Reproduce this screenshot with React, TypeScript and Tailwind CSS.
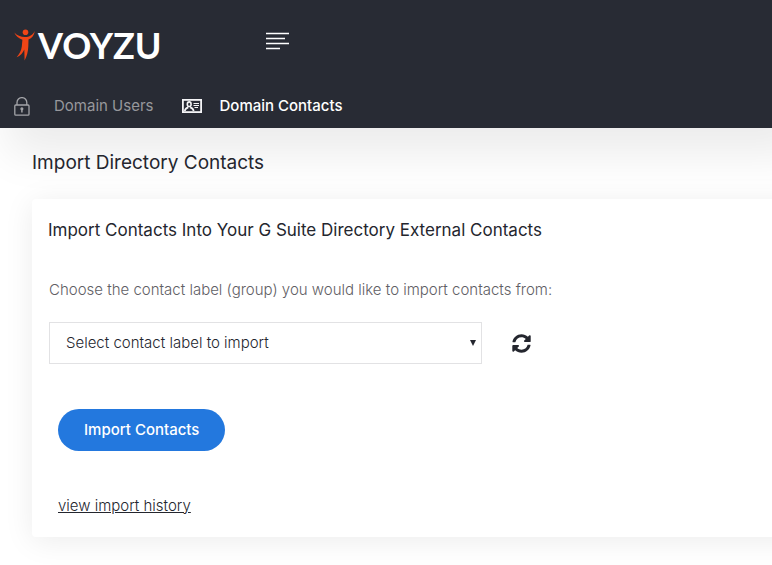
import { useState } from 'react';

function LogoFigure() {
  return (
    <svg width="22" height="32" viewBox="0 0 22 32" fill="#f04516" aria-hidden="true">
      <circle cx="11.5" cy="3.2" r="2.8" />
      <path d="M0.3 3.6C3 6.600 6.500 8 11 8S18.500 6.200 20.800 2C20.200 6.500 17.800 9 14.500 10.500L14.300 17.500C14.100 22.500 12.800 27.500 10.600 31.500L10.300 20.500C8.800 24 6.300 26.800 2.600 28.300C5.500 25.200 7.300 21.500 7.800 17.500L8.400 10.700C4.800 9.500 1.800 7 0.300 3.600Z" />
    </svg>
  );
}

function MenuIcon() {
  return (
    <svg width="23" height="18" viewBox="0 0 23 18" stroke="#fff" strokeWidth="1.6" aria-hidden="true">
      <path d="M0 1.500H23M0 6.500H19M0 11.500H23M0 16.500H14" />
    </svg>
  );
}

function LockIcon() {
  return (
    <svg width="16" height="19" viewBox="0 0 16 19" fill="none" stroke="#a3a4a8" strokeWidth="1.3" aria-hidden="true">
      <rect x="0.800" y="8" width="14.200" height="10.200" rx="1" />
      <path d="M3 8V5.500a4.900 4.900 0 0 1 9.800 0V8" />
      <circle cx="7.900" cy="11.800" r="0.900" fill="#a3a4a8" />
      <path d="M7.900 12V15.500" strokeWidth="1.500" />
    </svg>
  );
}

function ContactCardIcon() {
  return (
    <svg width="20" height="14" viewBox="0 0 20 14" fill="none" stroke="#f4f4f6" aria-hidden="true">
      <rect x="0.900" y="0.900" width="18.200" height="12.200" strokeWidth="1.800" />
      <ellipse cx="7.200" cy="5.200" rx="1.900" ry="2.300" strokeWidth="1.600" />
      <path d="M2.800 12C3 9.500 4.400 9 6.200 8.300M11.600 12C11.400 9.500 10 9 8.200 8.300" strokeWidth="1.700" />
      <path d="M11.500 4.500H17M11.500 6.500H17M12.500 8.500H16" strokeWidth="1.100" />
    </svg>
  );
}

function RefreshIcon() {
  return (
    <svg width="19" height="19" viewBox="0 0 512 512" fill="currentColor" aria-hidden="true">
      <path d="M370.720 133.280C339.458 104.008 298.888 87.962 255.848 88c-77.458.068-144.328 53.178-162.791 126.850-1.344 5.363-6.122 9.150-11.651 9.150H24.103c-7.498 0-13.194-6.807-11.807-14.176C33.933 94.924 134.813 8 256 8c66.448 0 126.791 26.136 171.315 68.685L463.030 40.970C478.149 25.851 504 36.559 504 57.941V192c0 13.255-10.745 24-24 24H345.941c-21.382 0-32.090-25.851-16.971-40.971l41.750-41.749zM32 296h134.059c21.382 0 32.090 25.851 16.971 40.971l-41.750 41.750c31.262 29.273 71.835 45.319 114.876 45.280 77.418-.070 144.315-53.144 162.787-126.849 1.344-5.363 6.122-9.150 11.651-9.150h57.304c7.498 0 13.194 6.807 11.807 14.176C478.067 417.076 377.187 504 256 504c-66.448 0-126.791-26.136-171.315-68.685L48.970 471.030C33.851 486.149 8 475.441 8 454.059V320c0-13.255 10.745-24 24-24z" />
    </svg>
  );
}

function Header() {
  return (
    <header className="-mr-10 h-32 bg-[#282b34] shadow-[0_34px_44px_-8px_rgba(0,0,0,0.08)]">
      <div className="flex h-[85px] items-center pl-[14px]">
        <a href="#" aria-label="Voyzu" className="flex w-[252px] items-center gap-[2px] pt-1 text-white">
          <LogoFigure />
          <span className="font-['Lato'] text-4xl leading-8 font-bold">VOYZU</span>
        </a>
        <button type="button" aria-label="Toggle menu" className="pb-1">
          <MenuIcon />
        </button>
      </div>
      <nav className="flex h-[42px] items-center gap-7 pl-[14px] text-[15px]">
        <a href="#users" className="flex items-center gap-6 text-[#97989c]">
          <LockIcon />
          Domain Users
        </a>
        <a href="#contacts" className="flex items-center gap-[18px] font-medium text-white">
          <ContactCardIcon />
          Domain Contacts
        </a>
      </nav>
    </header>
  );
}

export default function App() {
  const [label, setLabel] = useState('');

  return (
    <div className="min-h-screen overflow-hidden bg-white font-['Inter',sans-serif] text-[#24262e]">
      <Header />

      <main className="pt-[21px] pb-7 pl-8">
        <h1 className="text-[19px] leading-7">Import Directory Contacts</h1>

        <section className="mt-[22px] -mr-10 rounded-sm bg-white px-4 pt-[19px] pb-[19px] shadow-[0_4px_30px_rgba(0,0,0,0.08)]">
          <h2 className="text-[17px] leading-6">Import Contacts Into Your G Suite Directory External Contacts</h2>

          <div className="pl-px text-[15px]">
            <label htmlFor="contact-label" className="mt-9 block leading-6 font-light text-[#5f6065]">
              Choose the contact label (group) you would like to import contacts from:
            </label>

            <div className="mt-5 flex items-center gap-[30px]">
              <div className="relative w-[433px]">
                <select
                  id="contact-label"
                  value={label}
                  onChange={(e) => setLabel(e.target.value)}
                  className="h-[42px] w-full appearance-none border border-[#e2e2e4] bg-white px-4 font-light"
                >
                  <option value="">Select contact label to import</option>
                </select>
                <svg
                  width="6"
                  height="6"
                  viewBox="0 0 6 6"
                  fill="#24262e"
                  className="pointer-events-none absolute top-[18px] right-[6px]"
                  aria-hidden="true"
                >
                  <path d="M0 0H6L3 6Z" />
                </svg>
              </div>
              <button type="button" aria-label="Refresh labels">
                <RefreshIcon />
              </button>
            </div>

            <div className="mt-[45px] flex flex-col items-start gap-[43px] pl-[9px]">
              <button type="button" className="h-[42px] rounded-full bg-[#2378de] px-[26px] font-medium text-white">
                Import Contacts
              </button>
              <a href="#history" className="leading-6 font-light underline">
                view import history
              </a>
            </div>
          </div>
        </section>
      </main>
    </div>
  );
}
